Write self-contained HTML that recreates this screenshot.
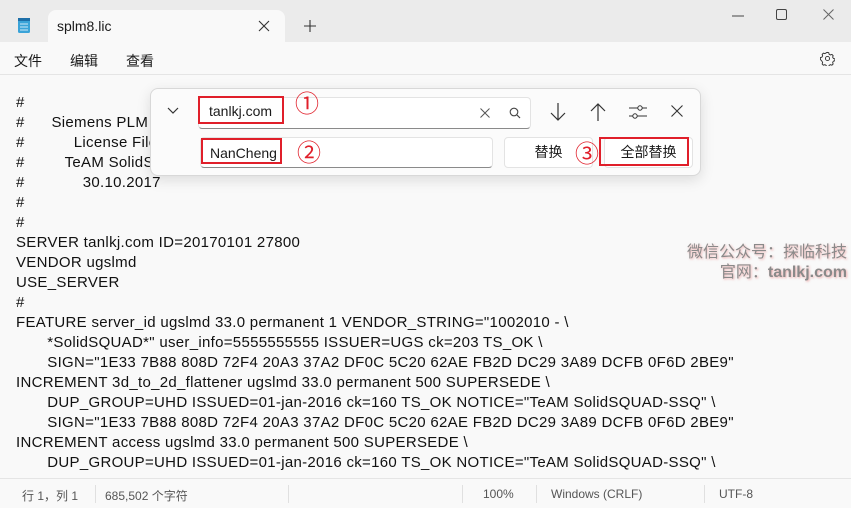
<!DOCTYPE html>
<html><head><meta charset="utf-8"><style>
*{margin:0;padding:0;box-sizing:border-box}
body{width:851px;height:508px;overflow:hidden;background:#f9f9f9;font-family:"Liberation Sans","Noto Sans CJK SC",sans-serif;position:relative;color:#1a1a1a}
.title{position:absolute;left:0;top:0;width:851px;height:42px;background:#ebebeb}
.tab{position:absolute;left:48px;top:10px;width:237px;height:32px;background:#f9f9f9;border-radius:8px 8px 0 0}
.menu{position:absolute;top:42px;left:0;width:851px;height:33px;border-bottom:1px solid #e5e5e5;font-size:14px}
.menu span{position:absolute;top:9px}
.text{position:absolute;left:16px;top:93px;font-size:15px;line-height:20px;white-space:pre;color:#111;letter-spacing:0.3px}
.status{position:absolute;left:0;top:478px;width:851px;height:30px;border-top:1px solid #e5e5e5;font-size:12px;color:#555}
.status span{position:absolute;top:8px}
.sep{position:absolute;top:6px;width:1px;height:18px;background:#e0e0e0}
.dlg{position:absolute;left:150px;top:88px;width:551px;height:88px;background:#fbfbfb;border:1px solid #d8d8d8;border-radius:8px;box-shadow:0 4px 14px rgba(0,0,0,.12)}
.inp{position:absolute;background:#fff;border:1px solid #e3e3e3;border-bottom:1px solid #8a8a8a;border-radius:4px}
.btn{position:absolute;background:#fff;border:1px solid #e3e3e3;border-radius:4px;font-size:14px;text-align:center;line-height:29px}
.red{position:absolute;border:2px solid #e01f2a}
.num{position:absolute;color:#e01f2a;font-size:24px;line-height:24px}
.wm{position:absolute;right:4px;font-size:16px;color:#8a8a8a;text-shadow:1px 1px 2px rgba(230,100,100,.5)}
</style></head><body>
<div class="title"></div>
<div class="tab"></div>
<svg style="position:absolute;left:17px;top:16px" width="14" height="18"><rect x="1" y="2" width="12" height="15" rx="1.5" fill="#3aa3d8"/><rect x="1" y="2" width="12" height="3" fill="#1e6fa8"/><path d="M3 8h8M3 11h8M3 14h8" stroke="#cfe9f7" stroke-width="1"/></svg>
<div style="position:absolute;left:57px;top:18px;font-size:14px">splm8.lic</div>
<svg style="position:absolute;left:258px;top:20px" width="12" height="12"><path d="M1 1L11 11M11 1L1 11" stroke="#333" stroke-width="1.1"/></svg>
<svg style="position:absolute;left:304px;top:20px" width="12" height="12"><path d="M6 0V12M0 6H12" stroke="#333" stroke-width="1.1"/></svg>
<svg style="position:absolute;left:732px;top:15px" width="12" height="2"><path d="M0 1H12" stroke="#444"/></svg>
<svg style="position:absolute;left:776px;top:9px" width="12" height="12"><rect x=".5" y=".5" width="10" height="10" rx="1.5" fill="none" stroke="#444"/></svg>
<svg style="position:absolute;left:823px;top:9px" width="12" height="12"><path d="M.5 .5L10.5 10.5M10.5 .5L.5 10.5" stroke="#666"/></svg>
<div class="menu"><span style="left:14px">文件</span><span style="left:70px">编辑</span><span style="left:126px">查看</span>
<svg style="position:absolute;left:820px;top:9px" width="15" height="15" viewBox="0 0 16 16"><path d="M8 1.5l1.3.3.4 1.6 1.4.8 1.6-.5 1.3 1.3-.5 1.6.8 1.4 1.6.4v2l-1.6.4-.8 1.4.5 1.6-1.3 1.3-1.6-.5-1.4.8-.4 1.6H7l-.4-1.6-1.4-.8-1.6.5-1.3-1.3.5-1.6-.8-1.4L.4 9V7l1.6-.4.8-1.4-.5-1.6 1.3-1.3 1.6.5 1.4-.8L6.7 1.8z" fill="none" stroke="#333" stroke-width="1"/><circle cx="8" cy="8" r="2.2" fill="none" stroke="#333"/></svg></div>
<div class="text">#
#      Siemens PLM
#           License File
#         TeAM SolidSQUAD
#             30.10.2017
#
#
SERVER tanlkj.com ID=20170101 27800
VENDOR ugslmd
USE_SERVER
#
FEATURE server_id ugslmd 33.0 permanent 1 VENDOR_STRING="1002010 - \
       *SolidSQUAD*" user_info=5555555555 ISSUER=UGS ck=203 TS_OK \
       SIGN="1E33 7B88 808D 72F4 20A3 37A2 DF0C 5C20 62AE FB2D DC29 3A89 DCFB 0F6D 2BE9"
INCREMENT 3d_to_2d_flattener ugslmd 33.0 permanent 500 SUPERSEDE \
       DUP_GROUP=UHD ISSUED=01-jan-2016 ck=160 TS_OK NOTICE="TeAM SolidSQUAD-SSQ" \
       SIGN="1E33 7B88 808D 72F4 20A3 37A2 DF0C 5C20 62AE FB2D DC29 3A89 DCFB 0F6D 2BE9"
INCREMENT access ugslmd 33.0 permanent 500 SUPERSEDE \
       DUP_GROUP=UHD ISSUED=01-jan-2016 ck=160 TS_OK NOTICE="TeAM SolidSQUAD-SSQ" \</div>
<div class="wm" style="top:238px">微信公众号：探临科技</div>
<div class="wm" style="top:258px">官网：<b>tanlkj.com</b></div>
<div class="dlg">
<svg style="position:absolute;left:16px;top:18px" width="12" height="8"><path d="M1 1l5 5 5-5" stroke="#333" fill="none" stroke-width="1.2"/></svg>
<div class="inp" style="left:47px;top:8px;width:333px;height:32px"></div>
<svg style="position:absolute;left:329px;top:19px" width="10" height="10"><path d="M.5 .5l9 9M9.5 .5l-9 9" stroke="#555"/></svg>
<svg style="position:absolute;left:358px;top:18px" width="12" height="12"><circle cx="5" cy="5" r="3.8" fill="none" stroke="#444" stroke-width="1.1"/><path d="M8 8l3 3" stroke="#444" stroke-width="1.2"/></svg>
<svg style="position:absolute;left:398px;top:13px" width="18" height="20"><path d="M9 1V18M2 11l7 7 7-7" stroke="#333" fill="none" stroke-width="1.2"/></svg>
<svg style="position:absolute;left:438px;top:13px" width="18" height="20"><path d="M9 19V2M2 9l7-7 7 7" stroke="#333" fill="none" stroke-width="1.2"/></svg>
<svg style="position:absolute;left:478px;top:15px" width="18" height="16"><path d="M0 4H18M0 12H18" stroke="#333"/><circle cx="11" cy="4" r="2.2" fill="#fbfbfb" stroke="#333"/><circle cx="6" cy="12" r="2.2" fill="#fbfbfb" stroke="#333"/></svg>
<svg style="position:absolute;left:520px;top:16px" width="12" height="12"><path d="M.5 .5l11 11M11.5 .5l-11 11" stroke="#333" stroke-width="1.1"/></svg>
<div class="inp" style="left:49px;top:48px;width:293px;height:31px"></div>
<div class="btn" style="left:353px;top:48px;width:89px;height:31px">替换</div>
<div class="btn" style="left:453px;top:48px;width:89px;height:31px">全部替换</div>
</div>
<div class="red" style="left:198px;top:96px;width:86px;height:28px"></div>
<div style="position:absolute;left:209px;top:103px;font-size:14px">tanlkj.com</div>
<div class="num" style="left:295px;top:93px">①</div>
<div class="red" style="left:201px;top:138px;width:81px;height:26px"></div>
<div style="position:absolute;left:210px;top:145px;font-size:14px">NanCheng</div>
<div class="num" style="left:297px;top:142px">②</div>
<div class="num" style="left:575px;top:143px">③</div>
<div class="red" style="left:599px;top:137px;width:90px;height:29px"></div>
<div class="status"><span style="left:22px">行 1，列 1</span><div class="sep" style="left:95px"></div><span style="left:105px">685,502 个字符</span><div class="sep" style="left:288px"></div><div class="sep" style="left:462px"></div><span style="left:483px">100%</span><div class="sep" style="left:536px"></div><span style="left:551px">Windows (CRLF)</span><div class="sep" style="left:704px"></div><span style="left:719px">UTF-8</span></div>
</body></html>
